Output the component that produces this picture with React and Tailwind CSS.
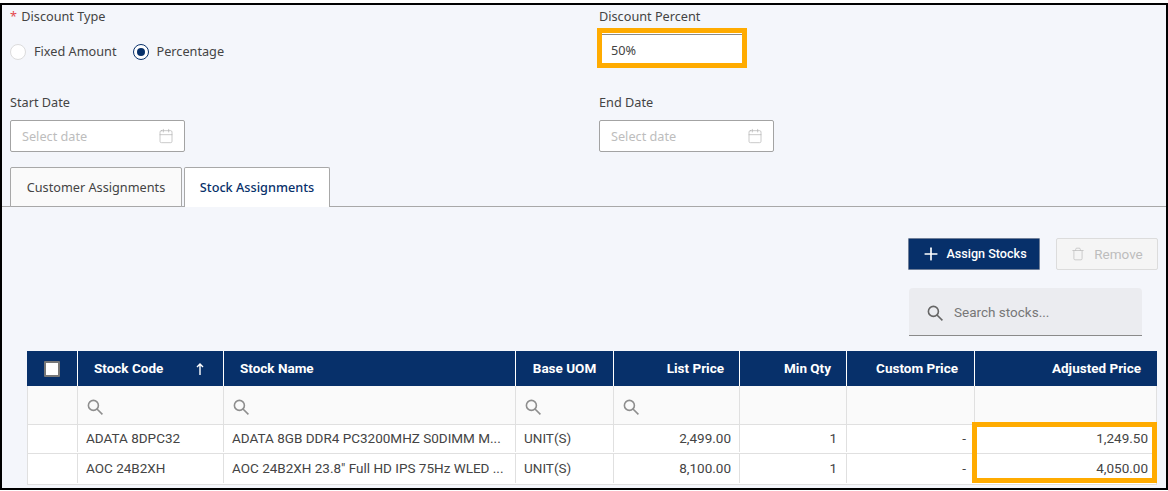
import React from "react";
import { Calendar, Plus, Trash } from "lucide-react";

const NAVY = "bg-[#07306a]";

const columns = {
    check: "w-[51px]",
    code: "w-[146px]",
    name: "w-[292px]",
    uom: "w-[98px]",
    list: "w-[126px]",
    qty: "w-[107px]",
    custom: "w-[128px]",
};

const rows = [
    {
        code: "ADATA 8DPC32",
        name: "ADATA 8GB DDR4 PC3200MHZ S0DIMM M...",
        uom: "UNIT(S)",
        list: "2,499.00",
        qty: "1",
        custom: "-",
        adjusted: "1,249.50",
        height: "h-[29px]",
    },
    {
        code: "AOC 24B2XH",
        name: 'AOC 24B2XH 23.8" Full HD IPS 75Hz WLED ...',
        uom: "UNIT(S)",
        list: "8,100.00",
        qty: "1",
        custom: "-",
        adjusted: "4,050.00",
        height: "h-[31px]",
    },
];

const DateField = ({ label }) => (
    <div>
        <div className="text-[12.7px] leading-[18px] text-[#444]">{label}</div>
        <div className="mt-[9px] flex h-[32px] w-[175px] items-center justify-between rounded-[2px] border border-[#a3a3a3] bg-white pl-[11px] pr-[10px]">
            <span className="pt-[1px] text-[12.7px] text-[#bdbdbd]">Select date</span>
            <Calendar size={16} strokeWidth={1} className="text-[#b0b0b0]" />
        </div>
    </div>
);

const MagnifierIcon = ({ className }) => (
    <svg width="16" height="16" viewBox="0 0 16 16" fill="none" stroke="currentColor" strokeWidth="1.6" className={className}>
        <circle cx="6.4" cy="6.4" r="5" />
        <path d="M10 10l5.4 5.4" />
    </svg>
);

const FilterIcon = () => <MagnifierIcon className="mt-[3px] text-[#8e8e8e]" />;

const App = () => {
    return (
        <div className="h-[491px] w-[1168px] overflow-hidden bg-white font-['Noto_Sans',sans-serif]">
            <div className="relative mt-[3px] h-[487px] border-2 border-black bg-[#f4f6fb]">
                {/* top form */}
                <div className="flex pl-[8px] pt-[2px]">
                    <div className="w-[589px]">
                        <div className="text-[12.7px] leading-[18px] text-[#444]">
                            <span className="mr-[1px] text-[#e5484d]">*</span> Discount Type
                        </div>
                        <div className="mt-[17px] flex h-[20px] items-center text-[12.7px] text-[#444]">
                            <span className="h-[16px] w-[16px] rounded-full border border-[#dcdcdc] bg-white" />
                            <span className="ml-[8px]">Fixed Amount</span>
                            <span className="ml-[17px] flex h-[16px] w-[16px] items-center justify-center rounded-full border border-[#07306a] bg-white">
                                <span className={`h-[8px] w-[8px] rounded-full ${NAVY}`} />
                            </span>
                            <span className="ml-[7px]">Percentage</span>
                        </div>
                    </div>
                    <div>
                        <div className="text-[12.7px] leading-[18px] text-[#444]">Discount Percent</div>
                        <div className="ml-[-2px] mt-[3px] h-[40px] w-[150px] border-[5px] border-[#ffab00] bg-white pt-[1px]">
                            <div className="flex h-full w-full items-center border-t border-[#8a8a8a] pl-[9px] pt-[4px] text-[12.7px] text-[#444]">
                                50%
                            </div>
                        </div>
                    </div>
                </div>
                <div className="mt-[25px] flex pl-[8px]">
                    <div className="w-[589px]">
                        <DateField label="Start Date" />
                    </div>
                    <DateField label="End Date" />
                </div>

                {/* tabs */}
                <div className="mt-[15px] flex h-[40px] items-end gap-[2px] border-b border-[#a8a8a8] pl-[8px]">
                    <div className="mb-[-1px] flex h-[40px] w-[172px] items-center justify-center rounded-t-[2px] border border-[#a8a8a8] bg-[#fafafa] pt-[1px] text-[12.7px] text-[#444]">
                        Customer Assignments
                    </div>
                    <div className="mb-[-1px] flex h-[40px] w-[146px] items-center justify-center rounded-t-[2px] border border-b-0 border-[#a8a8a8] bg-white text-[12.7px] font-medium text-[#07306a]">
                        Stock Assignments
                    </div>
                </div>

                {/* toolbar */}
                <div className="mt-[31px] flex justify-end gap-[16px] pr-[8px] font-['Roboto',sans-serif]">
                    <button className={`flex h-[32px] w-[132px] items-center justify-center gap-[5px] rounded-[1px] border border-[#6f7f99] ${NAVY} text-[12.6px] font-medium text-white`}>
                        <Plus size={20} strokeWidth={2} />
                        <span className="pt-[1px]">Assign Stocks</span>
                    </button>
                    <button className="flex h-[32px] w-[102px] items-center justify-center gap-[9px] rounded-[2px] border border-[#dcdcdc] bg-[#f5f5f5] text-[13.5px] text-[#bdbdbd]">
                        <Trash size={14} strokeWidth={1.25} />
                        Remove
                    </button>
                </div>
                <div className="mt-[18px] flex justify-end pr-[24px] font-['Roboto',sans-serif]">
                    <div className="flex h-[48px] w-[233px] items-center rounded-t-[4px] border-b border-[#8a8a8a] bg-[#ebecf0] pl-[18px] pt-[2px] text-[13.5px] text-[#777]">
                        <MagnifierIcon className="text-[#666]" />
                        <span className="ml-[11px]">Search stocks...</span>
                    </div>
                </div>

                {/* table */}
                <div className="ml-[25px] mr-[9px] mt-[15px] font-['Roboto',sans-serif]">
                    <div className={`flex h-[35px] ${NAVY} text-[13.5px] font-bold text-white`}>
                        <div className={`${columns.check} flex items-center justify-center border-r border-white`}>
                            <span className="h-[16px] w-[16px] rounded-[1px] border-2 border-[#777] bg-white" />
                        </div>
                        <div className={`${columns.code} flex items-center justify-between border-r border-white pl-[16px] pr-[19px]`}>
                            Stock Code
                            <svg width="8" height="12" viewBox="0 0 8 12" fill="none" stroke="currentColor" strokeWidth="1.4">
                                <path d="M4 12V1M1 4l3-3 3 3" />
                            </svg>
                        </div>
                        <div className={`${columns.name} flex items-center border-r border-white pl-[16px]`}>Stock Name</div>
                        <div className={`${columns.uom} flex items-center justify-center border-r border-white`}>Base UOM</div>
                        <div className={`${columns.list} flex items-center justify-end border-r border-white pr-[15px]`}>List Price</div>
                        <div className={`${columns.qty} flex items-center justify-end border-r border-white pr-[15px]`}>Min Qty</div>
                        <div className={`${columns.custom} flex items-center justify-end border-r border-white pr-[16px]`}>Custom Price</div>
                        <div className="flex flex-1 items-center justify-end pr-[16px]">Adjusted Price</div>
                    </div>
                    <div className="flex h-[39px] border-x border-b border-[#e0e0e0] bg-[#fafafa]">
                        <div className="w-[50px] border-r border-[#e0e0e0]" />
                        <div className={`${columns.code} flex items-center border-r border-[#e0e0e0] pl-[9px]`}><FilterIcon /></div>
                        <div className={`${columns.name} flex items-center border-r border-[#e0e0e0] pl-[9px]`}><FilterIcon /></div>
                        <div className={`${columns.uom} flex items-center border-r border-[#e0e0e0] pl-[9px]`}><FilterIcon /></div>
                        <div className={`${columns.list} flex items-center border-r border-[#e0e0e0] pl-[9px]`}><FilterIcon /></div>
                        <div className={`${columns.qty} border-r border-[#e0e0e0]`} />
                        <div className={`${columns.custom} border-r border-[#e0e0e0]`} />
                        <div className="flex-1" />
                    </div>
                    {rows.map((row) => (
                        <div key={row.code} className={`flex ${row.height} border-x border-b border-[#e0e0e0] bg-white pb-[1px] text-[13.5px] text-[#444]`}>
                            <div className="w-[50px] border-r border-[#e0e0e0]" />
                            <div className={`${columns.code} flex items-center border-r border-[#e0e0e0] pl-[8px]`}>{row.code}</div>
                            <div className={`${columns.name} flex items-center whitespace-nowrap border-r border-[#e0e0e0] pl-[8px]`}>{row.name}</div>
                            <div className={`${columns.uom} flex items-center border-r border-[#e0e0e0] pl-[8px]`}>{row.uom}</div>
                            <div className={`${columns.list} flex items-center justify-end border-r border-[#e0e0e0] pr-[8px]`}>{row.list}</div>
                            <div className={`${columns.qty} flex items-center justify-end border-r border-[#e0e0e0] pr-[9px]`}>{row.qty}</div>
                            <div className={`${columns.custom} flex items-center justify-end border-r border-[#e0e0e0] pr-[8px]`}>{row.custom}</div>
                            <div className="flex flex-1 items-center justify-end pr-[8px]">{row.adjusted}</div>
                        </div>
                    ))}
                </div>

                {/* highlight over the adjusted price cells */}
                <div className="absolute left-[970px] top-[417px] h-[61px] w-[185px] border-[5px] border-[#ffab00]" />
            </div>
        </div>
    );
};

export default App;
